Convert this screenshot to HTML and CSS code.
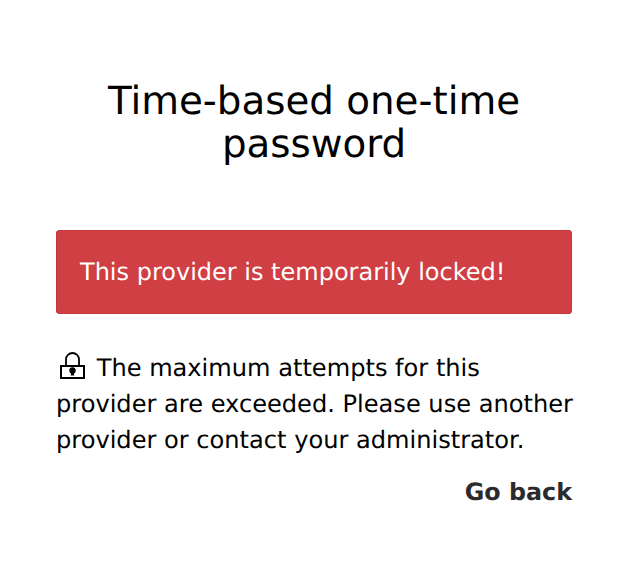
FILE: index.html
```html
<!DOCTYPE html>
<html lang="en">
<head>
    <meta charset="UTF-8">
    <title>Time-based one-time password</title>
    <link rel="stylesheet" href="styles.css">
</head>
<body>
<div class="container">
    <h1>Time-based one-time password</h1>
    <div class="alert">This provider is temporarily locked!</div>
    <p class="message">
        <svg class="lock" width="25" height="27" viewBox="0 0 25 27">
            <path d="M6 14V7.500a6.500 6.500 0 0 1 13 0V14" fill="none" stroke="#000" stroke-width="1.800"/>
            <rect x="1" y="14" width="23" height="12" fill="none" stroke="#000" stroke-width="2"/>
            <circle cx="12.500" cy="18.500" r="3.200" fill="#000"/>
            <path d="M11.500 19h2l.8 4.500h-3.600z" fill="#000"/>
        </svg>
        The maximum attempts for this provider are exceeded. Please use another provider or contact your administrator.
    </p>
    <div class="actions"><a href="#">Go back</a></div>
</div>
</body>
</html>
```

FILE: styles.css
```css
body {
    margin: 0;
    font-family: "DejaVu Sans", sans-serif;
    color: #000;
    background-color: #fff;
    text-rendering: geometricPrecision;
}
.container {
    padding: 80px 58px 0 56px;
}
h1 {
    margin: 0 0 64px;
    font-size: 38.800px;
    font-weight: normal;
    line-height: 43px;
    text-align: center;
}
.alert {
    padding: 26px 23px;
    font-size: 24px;
    line-height: 30px;
    color: #fff;
    background-color: #d03f43;
    border: 1px solid #bf383c;
    border-radius: 3px;
}
.message {
    margin: 36px -6px 0 0;
    font-size: 24.100px;
    line-height: 36px;
}
.lock {
    margin: 0 4px 0 4px;
    vertical-align: -3px;
}
.actions {
    margin-top: 16px;
    text-align: right;
}
.actions a {
    font-size: 23.800px;
    font-weight: bold;
    line-height: 36px;
    color: #2b2b2b;
    text-decoration: none;
}
```
